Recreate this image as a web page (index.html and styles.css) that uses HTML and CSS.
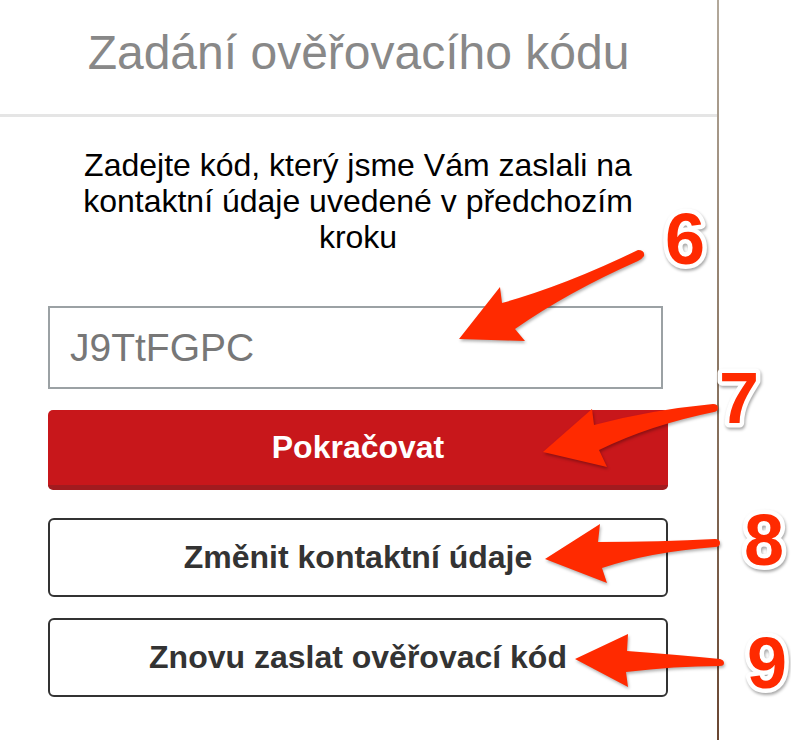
FILE: index.html
```html
<!DOCTYPE html>
<html lang="cs">
<head>
<meta charset="utf-8">
<title>Zadání ověřovacího kódu</title>
<link rel="stylesheet" href="styles.css">
</head>
<body>
<div class="panel">
  <header class="header">
    <h1 class="title">Zadání ověřovacího kódu</h1>
  </header>
  <main class="content">
    <p class="intro">Zadejte kód, který jsme Vám zaslali na kontaktní údaje uvedené v předchozím kroku</p>
    <input class="code-input" type="text" value="J9TtFGPC">
    <button class="btn btn-primary" type="button">Pokračovat</button>
    <button class="btn btn-outline btn-change" type="button">Změnit kontaktní údaje</button>
    <button class="btn btn-outline btn-resend" type="button">Znovu zaslat ověřovací kód</button>
  </main>
</div>

<svg class="annotations" width="791" height="740" viewBox="0 0 791 740" xmlns="http://www.w3.org/2000/svg">
  <g class="arrows">
    <path d="M459,339 L500,287 L502,303 Q566,285 638,250 Q645,250 644,256 Q642,259 638,261 Q568,292 515,329 L525,341 Z"/>
    <path d="M543,452 L592,409 L594,425 Q650,410 713,404 Q718,404 718,408 Q718,411 714,412 Q650,425 599,450 L607,467 Z"/>
    <path d="M545,559 L600,524 L598,542 Q660,542 715,539 Q720,539 720,543 Q720,547 715,547 Q650,552 602,568 L607,583 Z"/>
    <path d="M575,659 L628,634 L627,651 Q680,655 720,659 Q724,660 724,663 Q724,666 720,666 Q675,666 626,672 L628,687 Z"/>
  </g>
  <g class="numbers">
    <text x="665" y="264">6</text>
    <text x="719" y="423">7</text>
    <text x="744" y="565">8</text>
    <text x="747" y="688">9</text>
  </g>
</svg>
</body>
</html>
```
FILE: styles.css
```css
html, body {
  margin: 0;
  padding: 0;
  background: #ffffff;
}

body {
  font-family: "Liberation Sans", Arial, Helvetica, sans-serif;
  position: relative;
  width: 791px;
  height: 740px;
  overflow: hidden;
}

.panel {
  width: 717px;
  height: 740px;
  border-right: 2px solid #8e7a66;
  border-image: linear-gradient(to bottom, #b3a99b 0%, #8c7764 50%, #6a4632 100%) 1;
}

.header {
  padding: 25px 0 33px;
  border-bottom: 3px solid #e5e5e5;
}

.title {
  margin: 0;
  font-size: 48px;
  line-height: 56px;
  font-weight: normal;
  color: #888888;
  text-align: center;
}

.content {
  padding: 30px 49px 0 48px;
  display: flex;
  flex-direction: column;
  align-items: flex-start;
}

.intro {
  margin: 0;
  width: 100%;
  font-size: 32px;
  line-height: 36px;
  color: #000000;
  text-align: center;
}

.code-input {
  display: block;
  box-sizing: border-box;
  margin: 51px 0 0;
  width: 615px;
  height: 83px;
  padding: 0 20px;
  border: 2px solid #9ba1a4;
  border-radius: 0;
  background: #ffffff;
  font-family: "Liberation Sans", Arial, Helvetica, sans-serif;
  font-size: 39px;
  color: #777777;
  outline: none;
}

.btn {
  display: block;
  box-sizing: border-box;
  width: 620px;
  margin: 0;
  padding: 0;
  font-family: "Liberation Sans", Arial, Helvetica, sans-serif;
  font-size: 32px;
  font-weight: bold;
  text-align: center;
  cursor: pointer;
}

.btn-primary {
  margin-top: 21px;
  height: 80px;
  background: #c8171b;
  color: #ffffff;
  border: none;
  border-bottom: 5px solid #a11b1f;
  border-radius: 5px;
}

.btn-outline {
  height: 79px;
  background: #ffffff;
  color: #333333;
  border: 2px solid #333333;
  border-radius: 6px;
}

.btn-change {
  margin-top: 28px;
}

.btn-resend {
  margin-top: 21px;
}

.annotations {
  position: absolute;
  left: 0;
  top: 0;
  pointer-events: none;
}

.arrows path {
  fill: #ff2a00;
  filter: drop-shadow(1px 2px 1.5px rgba(0, 0, 0, 0.3));
}

.numbers text {
  font-family: "Liberation Sans", Arial, Helvetica, sans-serif;
  font-size: 72px;
  font-weight: bold;
  fill: #ff2a00;
  stroke: #ffffff;
  stroke-width: 9px;
  stroke-linejoin: round;
  paint-order: stroke;
  filter: drop-shadow(1px 2px 1.5px rgba(0, 0, 0, 0.35));
}
```
